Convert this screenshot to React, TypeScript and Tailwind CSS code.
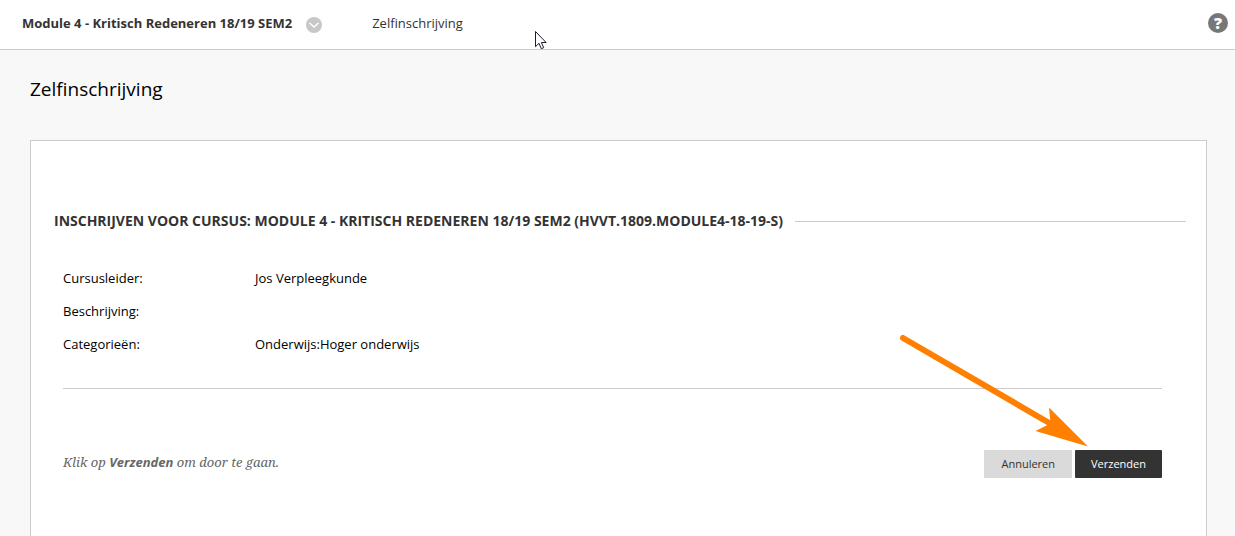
const details = [
  { label: 'Cursusleider:', value: 'Jos Verpleegkunde' },
  { label: 'Beschrijving:', value: '' },
  { label: 'Categorieën:', value: 'Onderwijs:Hoger onderwijs' },
];

function ChevronBadge() {
  return (
    <svg viewBox="0 0 16 16" className="block size-4" aria-hidden="true">
      <circle cx="8" cy="8" r="8" fill="#c8c8c8" />
      <path d="M3.6 5.6 8 9.8l4.4-4.2" fill="none" stroke="#fff" strokeWidth="1.9" />
      <path d="M3.8 4.6 8 8.6l4.2-4" fill="none" stroke="#aaa" strokeWidth="0.6" />
    </svg>
  );
}

function Pointer() {
  return (
    <svg
      viewBox="0 0 13 20"
      className="pointer-events-none absolute top-[30px] left-[534px] z-10 h-5 w-[13px]"
      aria-hidden="true"
    >
      <path
        d="M1.5 1.5v15.2l3.5-3.4 2.3 5.4 2.4-1-2.3-5.2h4.7z"
        fill="#fff"
        stroke="#1c1c28"
        strokeWidth="1"
      />
    </svg>
  );
}

function Arrow() {
  return (
    <svg
      viewBox="0 0 190 115"
      className="pointer-events-none absolute right-[74px] bottom-[31px] h-[115px] w-[190px]"
      aria-hidden="true"
    >
      <path d="M5 6 153 92" stroke="#ff8000" strokeWidth="6" strokeLinecap="round" />
      <path d="M190 114.5 151 75.5l1.5 16-15 7.5z" fill="#ff8000" />
    </svg>
  );
}

function Header() {
  return (
    <header className="relative flex h-[50px] items-center border-b border-[#ccc] bg-white pr-[7px] pb-[3px] pl-[22px] text-[13px]">
      <a href="#module" className="pt-0.5 font-bold text-[#333]">
        Module 4 - Kritisch Redeneren 18/19 SEM2
      </a>
      <button type="button" aria-label="Module menu" className="ml-[14px] pt-[3px]">
        <ChevronBadge />
      </button>
      <a href="#zelfinschrijving" className="ml-[50px] pt-0.5 text-[#333]">
        Zelfinschrijving
      </a>
      <button
        type="button"
        aria-label="Help"
        className="ml-auto flex size-5 items-center justify-center rounded-full bg-[#777] text-base leading-5 font-extrabold text-white"
      >
        ?
      </button>
      <Pointer />
    </header>
  );
}

export default function App() {
  return (
    <div className="flex min-h-screen flex-col bg-[#f8f8f8] font-['Open_Sans','Noto_Sans',sans-serif] text-black">
      <Header />
      <main className="flex grow flex-col pr-7 pl-[30px]">
        <h1 className="pt-[26px] pb-[38px] text-[19px] leading-[26px]">Zelfinschrijving</h1>
        <form
          className="grow border border-b-0 border-[#ccc] bg-white pt-[70px] pr-5 pb-14 pl-[23px]"
          onSubmit={(event) => event.preventDefault()}
        >
          <div className="flex items-center gap-3">
            <h2 className="text-sm leading-5 font-bold text-[#333]">
              INSCHRIJVEN VOOR CURSUS: MODULE 4 - KRITISCH REDENEREN 18/19 SEM2 (HVVT.1809.MODULE4-18-19-S)
            </h2>
            <div className="h-px grow bg-[#ccc]" />
          </div>
          <div className="pr-6 pl-[9px]">
            <dl className="mt-[37px] flex flex-col gap-[13px] border-b border-[#ccc] pb-[34px] text-[13px] leading-5">
              {details.map((item) => (
                <div key={item.label} className="flex">
                  <dt className="w-48 shrink-0">{item.label}</dt>
                  <dd>{item.value}</dd>
                </div>
              ))}
            </dl>
            <div className="relative mt-[61px] flex items-center justify-between">
              <p className="pb-1 font-['Droid_Serif','Noto_Serif','DejaVu_Serif_Condensed','DejaVu_Serif',serif] text-[13px] leading-5 text-[#666] italic">
                Klik op <strong className="font-['Open_Sans','Noto_Sans',sans-serif]">Verzenden</strong> om door te
                gaan.
              </p>
              <div className="flex gap-[3px] text-[11px] leading-4">
                <button type="button" className="h-7 rounded-[1px] bg-[#dadada] px-[17px] text-[#333]">
                  Annuleren
                </button>
                <button type="submit" className="h-7 rounded-[1px] bg-[#333] px-4 font-medium text-white">
                  Verzenden
                </button>
              </div>
              <Arrow />
            </div>
          </div>
        </form>
      </main>
    </div>
  );
}
